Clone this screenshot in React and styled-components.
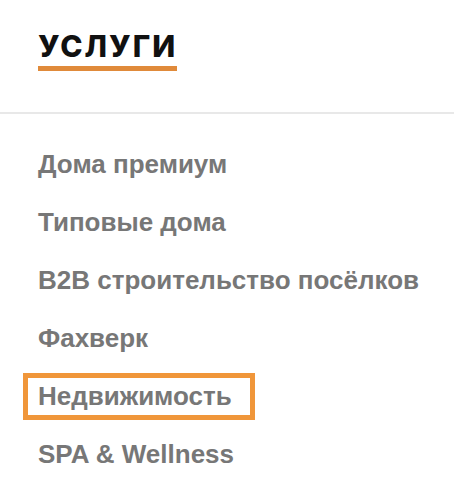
import React from 'react';
import styled, { createGlobalStyle } from 'styled-components';

const GlobalStyle = createGlobalStyle`
  html, body {
    margin: 0;
    padding: 0;
    background: #ffffff;
  }
`

const Wrapper = styled.div`
  width: 454px;
  height: 502px;
  background: #ffffff;
  overflow: hidden;
`

const Header = styled.div`
  padding: 30px 0 0 38px;
  height: 114px;
  box-sizing: border-box;
  border-bottom: 2px solid #e8e8e8;
`

const Title = styled.h2`
  display: inline-block;
  margin: 0;
  font-family: Inter, "Liberation Sans", sans-serif;
  font-weight: 800;
  font-size: 30px;
  line-height: 33px;
  color: #111111;
  letter-spacing: 2px;
  padding-bottom: 3px;
  border-bottom: 5px solid #e08a3a;
`

const List = styled.ul`
  list-style: none;
  margin: 0;
  padding: 32px 0 0 28px;
  display: flex;
  flex-direction: column;
  align-items: flex-start;
  gap: 21px;
`

const Item = styled.li`
  display: block;
`

const ItemLink = styled.a`
  display: inline-block;
  padding: 0 18px 0 10px;
  font-family: "Liberation Sans", Arial, sans-serif;
  font-weight: 700;
  font-size: 26px;
  line-height: 37px;
  color: #777777;
  text-decoration: none;
  outline: ${p => (p.$active ? '5px solid #f0963a' : 'none')};
`

const items = [
  'Дома премиум',
  'Типовые дома',
  'B2B строительство посёлков',
  'Фахверк',
  'Недвижимость',
  'SPA & Wellness',
]

const App = () => {
  return (
    <Wrapper>
      <GlobalStyle />
      <Header>
        <Title>УСЛУГИ</Title>
      </Header>
      <List>
        {items.map(item => (
          <Item key={item}>
            <ItemLink href="#" $active={item === 'Недвижимость'}>{item}</ItemLink>
          </Item>
        ))}
      </List>
    </Wrapper>
  )
}

export default App;
